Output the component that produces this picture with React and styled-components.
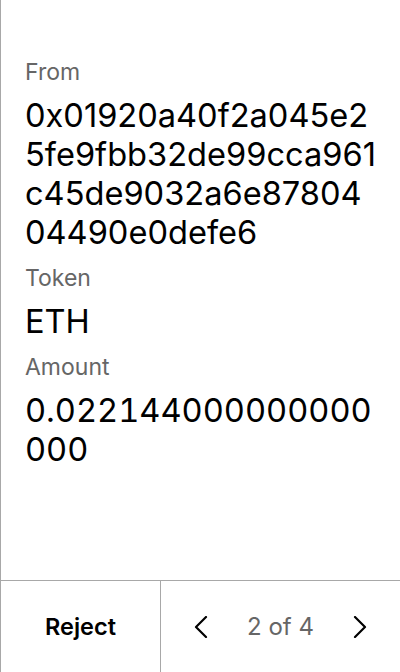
import React from "react";
import styled, { createGlobalStyle } from "styled-components";

const Global = createGlobalStyle`
  html, body { margin: 0; padding: 0; background: #fff; }
  body { font-family: Inter, "Noto Sans", sans-serif; }
  #root { height: 672px; }
`;

const Screen = styled.div`
  height: 672px;
  box-sizing: border-box;
  border-left: 1px solid #a8a8a8;
  display: flex;
  flex-direction: column;
  background: #fff;
`;

const Content = styled.div`
  flex: 1;
  padding: 58px 24px 0 24px;
  display: flex;
  flex-direction: column;
  gap: 12px;
`;

const Field = styled.div`
  display: flex;
  flex-direction: column;
  gap: 10px;
`;

const Label = styled.div`
  font-size: 23px;
  line-height: 28px;
  color: #666;
`;

const Value = styled.div`
  font-size: 32.6px;
  line-height: 39px;
  color: #000;
  word-break: break-all;
  font-variant-numeric: ${(p) => (p.$numeric ? "tabular-nums" : "normal")};
`;

const Footer = styled.div`
  height: 92px;
  box-sizing: border-box;
  border-top: 1px solid #a8a8a8;
  display: grid;
  grid-template-columns: 160px 1fr;
`;

const RejectButton = styled.button`
  border: none;
  background: none;
  font-family: inherit;
  font-size: 23.5px;
  font-weight: 600;
  color: #000;
  padding: 0;
  border-right: 1px solid #a8a8a8;
  cursor: pointer;
`;

const Pager = styled.div`
  display: flex;
  align-items: center;
  justify-content: space-between;
  padding: 0 33px 0 33px;
`;

const Arrow = styled.button`
  border: none;
  background: none;
  padding: 0;
  display: flex;
  cursor: pointer;
`;

const PageText = styled.span`
  font-size: 24px;
  color: #666;
`;

const Chevron = ({ dir }) => (
  <svg width="14" height="22" viewBox="0 0 14 22" fill="none">
    <path
      d={dir === "left" ? "M12 1 L2 11 L12 21" : "M2 1 L12 11 L2 21"}
      stroke="#000"
      strokeWidth="2.2"
      strokeLinecap="round"
      strokeLinejoin="round"
    />
  </svg>
);

export default function App() {
  const fields = [
    { label: "From", value: "0x01920a40f2a045e25fe9fbb32de99cca961c45de9032a6e8780404490e0defe6" },
    { label: "Token", value: "ETH" },
    { label: "Amount", value: "0.022144000000000000", numeric: true },
  ];
  return (
    <Screen>
      <Global />
      <Content>
        {fields.map((f) => (
          <Field key={f.label}>
            <Label>{f.label}</Label>
            <Value $numeric={f.numeric}>{f.value}</Value>
          </Field>
        ))}
      </Content>
      <Footer>
        <RejectButton>Reject</RejectButton>
        <Pager>
          <Arrow><Chevron dir="left" /></Arrow>
          <PageText>2 of 4</PageText>
          <Arrow><Chevron dir="right" /></Arrow>
        </Pager>
      </Footer>
    </Screen>
  );
}
